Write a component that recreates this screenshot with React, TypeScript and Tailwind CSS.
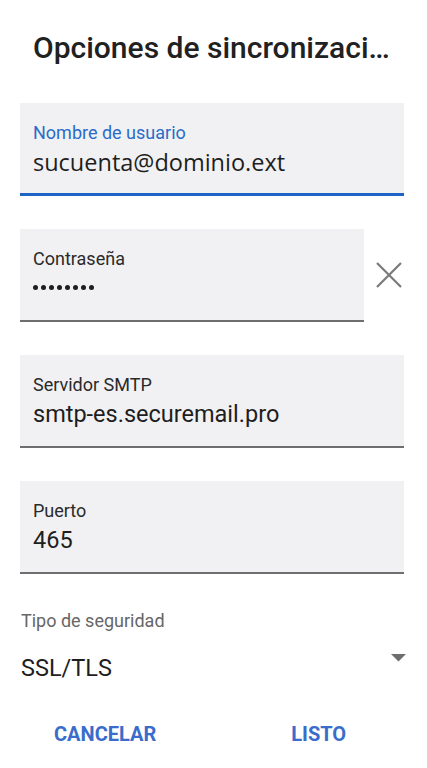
import { ReactNode } from "react";

interface FieldProps {
  label: string;
  children: ReactNode;
  active?: boolean;
}

function Field({ label, children, active }: FieldProps) {
  return (
    <div
      className={`h-[93px] bg-[#f1f1f3] pl-[13px] pt-[19px] ${
        active ? "border-b-[3px] border-[#1f64c4]" : "border-b-2 border-[#6e6e6e]"
      }`}
    >
      <p
        className={`text-[18px] leading-[22px] ${
          active ? "text-[#2a6cc8]" : "text-[#2a2a2a]"
        }`}
      >
        {label}
      </p>
      <div className="mt-[3px] h-[30px] text-[23.5px] leading-[30px] text-[#1e1e1e]">{children}</div>
    </div>
  );
}

export default function App() {
  return (
    <div className="w-[427px] h-[768px] bg-white font-['Roboto',sans-serif] overflow-hidden">
      <h1 className="pt-[31px] pl-[33px] pr-[36px] text-[30px] leading-[34px] font-medium text-[#212121] truncate">
        Opciones de sincronización
      </h1>

      <div className="mt-[38px] pl-[20px] pr-[23px] flex flex-col gap-[33px]">
        <Field label="Nombre de usuario" active>
          <span className="font-['Open_Sans',sans-serif]">sucuenta@dominio.ext</span>
        </Field>

        <div className="flex items-center">
          <div className="w-[344px]">
            <Field label="Contraseña">
              <div className="flex items-center gap-[3px] h-[29px]">
                {Array.from({ length: 8 }).map((_, i) => (
                  <span key={i} className="w-[5px] h-[5px] rounded-full bg-[#1e1e1e]" />
                ))}
              </div>
            </Field>
          </div>
          <svg
            className="ml-[12px] mt-[-2px]"
            width="26"
            height="26"
            viewBox="0 0 26 26"
            fill="none"
            stroke="#7a7a7a"
            strokeWidth="2.2"
          >
            <path d="M1 1 L25 25 M25 1 L1 25" />
          </svg>
        </div>

        <Field label="Servidor SMTP">smtp-es.securemail.pro</Field>

        <Field label="Puerto">465</Field>
      </div>

      <div className="mt-[36px] pl-[21px] pr-[21px]">
        <p className="text-[18px] leading-[22px] text-[#666666]">Tipo de seguridad</p>
        <div className="mt-[21px] flex items-start justify-between">
          <span className="text-[23.5px] leading-[30px] text-[#1e1e1e]">SSL/TLS</span>
          <svg className="mt-[1px]" width="15" height="8" viewBox="0 0 15 8">
            <path d="M0 0 H15 L7.5 7.5 Z" fill="#6e6e6e" />
          </svg>
        </div>
      </div>

      <div className="mt-[39px] flex">
        <button className="ml-[54px] text-[20px] leading-[24px] font-bold text-[#3a6ccb]">
          CANCELAR
        </button>
        <button className="ml-[135px] text-[20px] leading-[24px] font-bold text-[#3a6ccb]">
          LISTO
        </button>
      </div>
    </div>
  );
}
